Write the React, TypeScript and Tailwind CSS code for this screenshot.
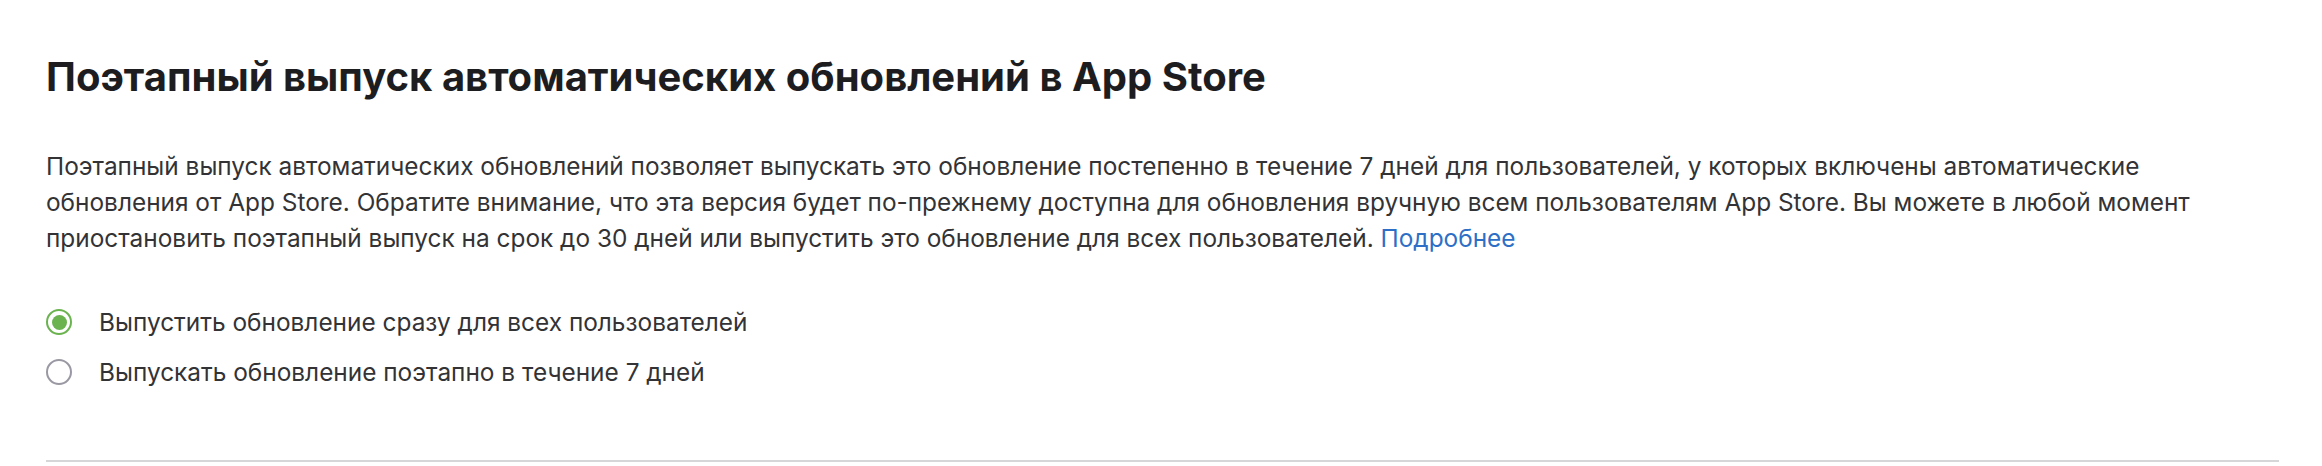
import React, { useState } from 'react';

type Option = { id: string; label: string };

const options: Option[] = [
  { id: 'all', label: 'Выпустить обновление сразу для всех пользователей' },
  { id: 'phased', label: 'Выпускать обновление поэтапно в течение 7 дней' },
];

const Radio: React.FC<{ checked: boolean }> = ({ checked }) => (
  <span
    className={
      checked
        ? 'flex h-[26px] w-[26px] shrink-0 items-center justify-center rounded-full border-2 border-[#6ab34f]'
        : 'flex h-[26px] w-[26px] shrink-0 items-center justify-center rounded-full border-2 border-[#9a99a3]'
    }
  >
    {checked && <span className="h-[15px] w-[15px] rounded-full bg-[#6ab34f]" />}
  </span>
);

export default function App() {
  const [value, setValue] = useState('all');

  return (
    <div className="min-h-[466px] w-full bg-white font-['Inter','Noto_Sans',sans-serif] text-[#333336]">
      <div className="pl-[46px] pr-[43px] pt-[52px]">
        <h2 className="text-[40px] font-bold leading-[50px] text-[#1d1d1f]">
          Поэтапный выпуск автоматических обновлений в App Store
        </h2>

        <p className="mt-[46px] text-[24.4px] leading-[36px]">
          Поэтапный выпуск автоматических обновлений позволяет выпускать это обновление постепенно в течение 7 дней
          для пользователей, у которых включены автоматические обновления от App Store. Обратите внимание, что эта
          версия будет по-прежнему доступна для обновления вручную всем пользователям App Store. Вы можете в любой
          момент приостановить поэтапный выпуск на срок до 30 дней или выпустить это обновление для всех
          пользователей.{' '}
          <a href="#" className="text-[#2d6fc6]">
            Подробнее
          </a>
        </p>

        <div className="mt-[48px] flex flex-col gap-[14px]">
          {options.map((opt) => (
            <label
              key={opt.id}
              className="flex cursor-pointer items-center gap-[27px] text-[24.4px] leading-[36px]"
              onClick={() => setValue(opt.id)}
            >
              <Radio checked={value === opt.id} />
              <span>{opt.label}</span>
            </label>
          ))}
        </div>

        <div className="mt-[70px] h-[2px] bg-[#d6d6d8]" />
      </div>
    </div>
  );
}
